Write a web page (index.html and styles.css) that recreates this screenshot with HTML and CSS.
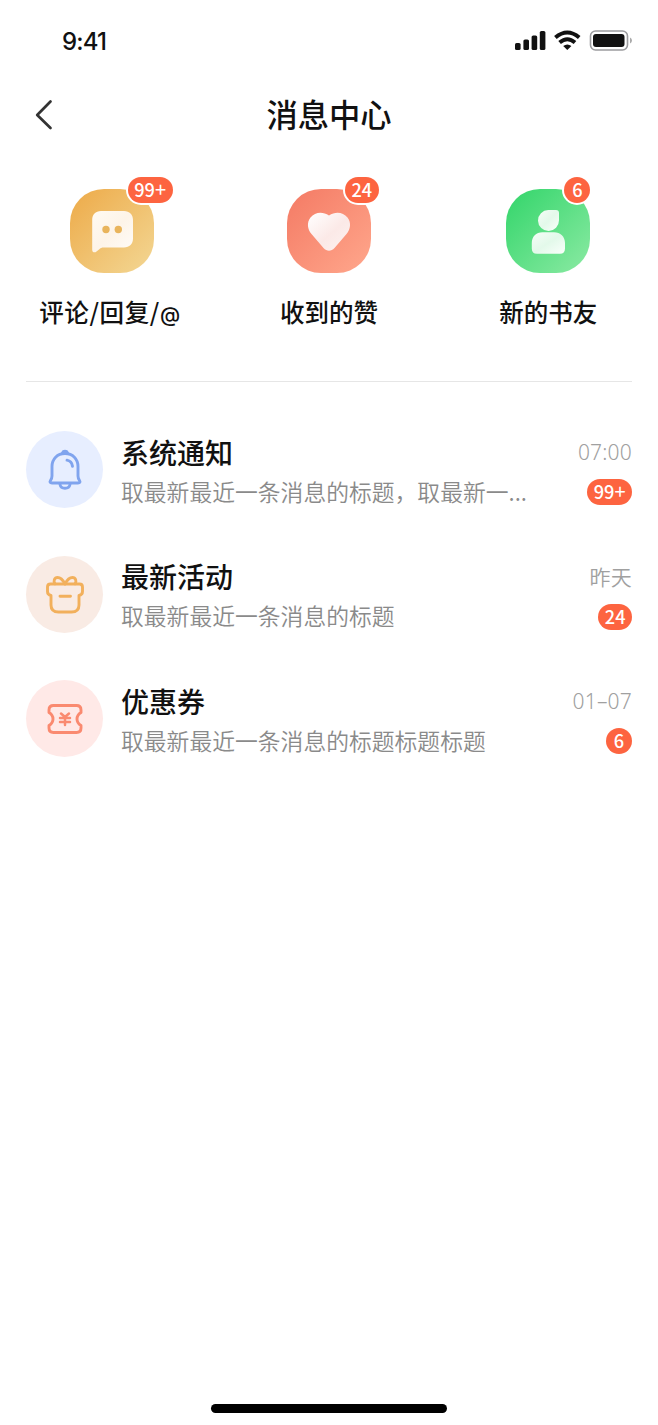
FILE: index.html
```html
<!DOCTYPE html>
<html lang="zh-CN">
<head>
<meta charset="utf-8">
<title>消息中心</title>
<link rel="stylesheet" href="styles.css">
</head>
<body>
<div class="screen">
  <div class="status">
    <span class="clock">9:41</span>
    <svg class="status-icons" width="118" height="24" viewBox="0 0 118 24">
      <g fill="#111">
        <rect x="0" y="13" width="5.6" height="7" rx="1.6"/>
        <rect x="8.4" y="9.5" width="5.6" height="10.5" rx="1.6"/>
        <rect x="16.6" y="5.5" width="5.6" height="14.5" rx="1.6"/>
        <rect x="24.8" y="1" width="5.6" height="19" rx="1.6"/>
        <path d="M52.3 20 L48.2 16 Q52.3 12.800 56.400 16Z"/>
      </g>
      <g fill="none" stroke="#111" stroke-width="4">
        <path d="M40.400 7.500 Q52.300 -2.500 64.200 7.500"/>
        <path d="M44.600 12.500 Q52.300 6 60 12.500"/>
      </g>
      <rect x="75.500" y="1" width="37" height="19" rx="5" fill="none" stroke="#9c9c9f" stroke-width="1.600"/>
      <rect x="78" y="4" width="31.500" height="13" rx="3" fill="#111"/>
      <path d="M115 7.500v6q2-1 2-3t-2-3" fill="#aaa"/>
    </svg>
  </div>
  <header class="header">
    <svg class="back" width="18" height="32" viewBox="0 0 18 32"><path d="M15.500 2.500 2.200 16l13.300 13" fill="none" stroke="#333" stroke-width="2.700" stroke-linecap="round" stroke-linejoin="round"/></svg>
    <h1 class="title">消息中心</h1>
  </header>
  <nav class="shortcuts">
    <a class="shortcut">
      <span class="tile tile-comment">
        <svg width="84" height="84" viewBox="0 0 84 84">
          <defs><linearGradient id="g1" x1="0" y1="0" x2="1" y2="1"><stop stop-color="#fffaf2"/><stop offset=".5" stop-color="#fdf4e8"/><stop offset="1" stop-color="#fffcf8"/></linearGradient></defs>
          <path d="M31 22h23c5.500 0 9 3.500 9 9v18.500c0 5.500-3.500 9-9 9H34c-2.500 0-3.500.5-5 2l-2.500 2c-2 1.700-4.300.8-4.300-1.800V31c0-5.500 3.300-9 8.800-9Z" fill="url(#g1)"/>
          <circle cx="36" cy="40.500" r="3.700" fill="#e9b45b"/><circle cx="48.300" cy="40.500" r="3.700" fill="#e9b45b"/>
        </svg>
        <b class="badge badge-float">99<span class="plus">+</span></b>
      </span>
      <span class="label label-wide">评论/回复/<span class="at">@</span></span>
    </a>
    <a class="shortcut">
      <span class="tile tile-like">
        <svg width="84" height="84" viewBox="0 0 84 84">
          <defs><linearGradient id="g2" x1="0" y1="0" x2="1" y2="1"><stop stop-color="#fff"/><stop offset=".55" stop-color="#fbe9e7"/><stop offset="1" stop-color="#fdf3f1"/></linearGradient></defs>
          <path d="M42 26.500C35.500 22 28 23 23.500 28.500c-4 5-3 12 1 16.500l12 14c3.300 3.500 7.700 3.500 11 0l12-14c4-4.500 5-11.500 1-16.500C56 23 48.500 22 42 26.500Z" fill="url(#g2)"/>
        </svg>
        <b class="badge badge-float">24</b>
      </span>
      <span class="label">收到的赞</span>
    </a>
    <a class="shortcut">
      <span class="tile tile-friend">
        <svg width="84" height="84" viewBox="0 0 84 84">
          <defs><linearGradient id="g3" x1="0" y1="0" x2="1" y2="1"><stop stop-color="#f6fdf8"/><stop offset=".5" stop-color="#e3f9ea"/><stop offset="1" stop-color="#fafffb"/></linearGradient></defs>
          <path d="M42.300 21H50q3 0 3 3v7.300a10.500 10.500 0 1 1-10.700-10.300Z" fill="url(#g3)"/>
          <path d="M36.500 43.200h11.500c6.500 0 11 4.500 11 10.800v5.500c0 3.500-1.700 5.200-5 5.200H31c-3.500 0-5.200-1.700-5.200-5.200v-5.500c0-6.300 4.200-10.800 10.700-10.800Z" fill="url(#g3)"/>
        </svg>
        <b class="badge badge-float">6</b>
      </span>
      <span class="label">新的书友</span>
    </a>
  </nav>
  <main class="list">
    <article class="item">
      <span class="avatar avatar-system">
        <svg width="40" height="44" viewBox="0 0 40 44" fill="none" stroke="#80a4ee" stroke-width="2.900" stroke-linecap="round" stroke-linejoin="round">
          <path d="M20 5.500c-7.700 0-13 5.500-13 13V28c0 2-.5 3-1.500 4.500s-.5 2.500 1.500 2.500h26c2 0 2.500-1 1.500-2.500S33 30 33 28v-9.500c0-7.500-5.300-13-13-13Z"/>
          <path d="M17.500 4.800c.8-2 4.200-2 5 0M15 36.500c1 5 9 5 10 0M22 12.200c3 .6 5 2.800 5.500 6"/>
        </svg>
      </span>
      <div class="body"><h2 class="name">系统通知</h2><p class="text">取最新最近一条消息的标题，取最新一...</p></div>
      <div class="meta"><time class="time">07:00</time><b class="badge">99<span class="plus">+</span></b></div>
    </article>
    <article class="item">
      <span class="avatar avatar-event">
        <svg width="40" height="44" viewBox="0 0 40 44" fill="none" stroke="#f2b05c" stroke-width="2.900" stroke-linecap="round" stroke-linejoin="round">
          <path d="M5.500 12h29c2 0 3 1 3 3v4.500c0 2.500-1 3.500-3.500 4v9.500c0 5-2.500 7-7.500 7h-13c-5 0-7.500-2-7.500-7v-9.500c-2.500-.5-3.500-1.500-3.500-4V15c0-2 1-3 3-3Z"/>
          <path d="M20 12c-2-4-4.500-6.500-7.500-6.500-3 0-4.500 3.500-2.500 6.300M20 12c2-4 4.500-6.500 7.500-6.500 3 0 4.500 3.500 2.500 6.300M15 24.300h10.500"/>
        </svg>
      </span>
      <div class="body"><h2 class="name">最新活动</h2><p class="text">取最新最近一条消息的标题</p></div>
      <div class="meta"><time class="time">昨天</time><b class="badge">24</b></div>
    </article>
    <article class="item">
      <span class="avatar avatar-coupon">
        <svg width="40" height="44" viewBox="0 0 40 44" fill="none" stroke="#fa8a70" stroke-width="2.900" stroke-linecap="round" stroke-linejoin="round">
          <path d="M8.500 8.500h23c3 0 4.500 1.500 4.500 4.500v2.500q-4 2.500-4 6.500t4 6.500V31c0 3-1.500 4.500-4.500 4.500h-23c-3 0-4.500-1.500-4.500-4.500v-2.500q4-2.500 4-6.500t-4-6.500V13c0-3 1.500-4.500 4.500-4.500Z"/>
          <path d="m16 16.500 4 3.500 4-3.500M15 21h10M15 25h10M20 20.500V28" stroke-width="2.500"/>
        </svg>
      </span>
      <div class="body"><h2 class="name">优惠券</h2><p class="text">取最新最近一条消息的标题标题标题</p></div>
      <div class="meta"><time class="time">01–07</time><b class="badge">6</b></div>
    </article>
  </main>
  <div class="home-bar"></div>
</div>
</body>
</html>
```
FILE: styles.css
```css
* { box-sizing: border-box; margin: 0; padding: 0; }
body { background: #fff; color: #111; font-family: "Noto Sans CJK SC", sans-serif; }
.screen { width: 658px; height: 1425px; display: flex; flex-direction: column; overflow: hidden; }
.status { height: 80px; padding: 0 25px 0 62px; display: flex; align-items: center; justify-content: space-between; }
.clock { font: 500 24px/30px Inter, sans-serif; letter-spacing: -.8px; margin-top: 4px; }
.status-icons { margin-top: 4px; }
.header { height: 70px; display: grid; grid-template-columns: 100px 1fr 100px; align-items: center; }
.back { margin-left: 35px; }
.title { font-weight: 500; font-size: 31.3px; line-height: 46px; text-align: center; margin-top: -2px; }
.shortcuts { display: grid; grid-template-columns: repeat(3, 1fr); height: 231px; padding-top: 39.4px; }
.shortcut { display: flex; flex-direction: column; align-items: center; }
.tile { position: relative; width: 84px; height: 84px; border-radius: 34px; }
.tile svg { display: block; }
.tile-comment { background: linear-gradient(135deg, #edaa48, #f3d794); margin-left: 4px; }
.tile-like { background: linear-gradient(135deg, #f47a64, #ffa78c); }
.tile-friend { background: linear-gradient(135deg, #32d56a, #8beaa3); }
.label { margin-top: 20.6px; font-weight: 500; font-size: 24.5px; line-height: 36px; white-space: nowrap; }
.label-wide { letter-spacing: .6px; }
.at { font: 500 20.5px/20px Inter, sans-serif; letter-spacing: 0; }
.badge { display: block; min-width: 26px; height: 26px; padding: 0 6.5px; border-radius: 13px; background: #fd6440; color: #fff; font: 500 18.2px/25px "Noto Sans CJK SC", sans-serif; text-align: center; white-space: nowrap; }
.plus { font-weight: 400; font-size: 20px; line-height: 20px; }
.badge-float { position: absolute; left: 58px; top: -12px; box-shadow: 0 0 0 2px #fff; }
.list { margin: 0 26px; border-top: 1px solid #e6e6e6; padding-top: 25.5px; }
.item { height: 124.500px; display: flex; align-items: center; }
.avatar { width: 77px; height: 77px; border-radius: 50%; display: flex; align-items: center; justify-content: center; flex: none; }
.avatar-system { background: #e7eeff; }
.avatar-event { background: #f9ebe4; }
.avatar-coupon { background: #ffe9e7; }
.body { flex: 1; margin-left: 18px; padding-top: 1px; }
.name { font-weight: 500; font-size: 28px; line-height: 42px; }
.text { font-weight: 350; font-size: 22.8px; line-height: 37px; color: #8a8a8a; white-space: nowrap; }
.meta { display: flex; flex-direction: column; align-items: flex-end; gap: 11px; padding-top: 2px; }
.time { font-family: "Noto Sans", "Noto Sans CJK SC", sans-serif; font-weight: 350; font-size: 21px; line-height: 32px; letter-spacing: .2px; color: #a0a0a0; }
.home-bar { width: 236px; height: 9px; border-radius: 5px; background: #000; margin: auto auto 12px; }
```
